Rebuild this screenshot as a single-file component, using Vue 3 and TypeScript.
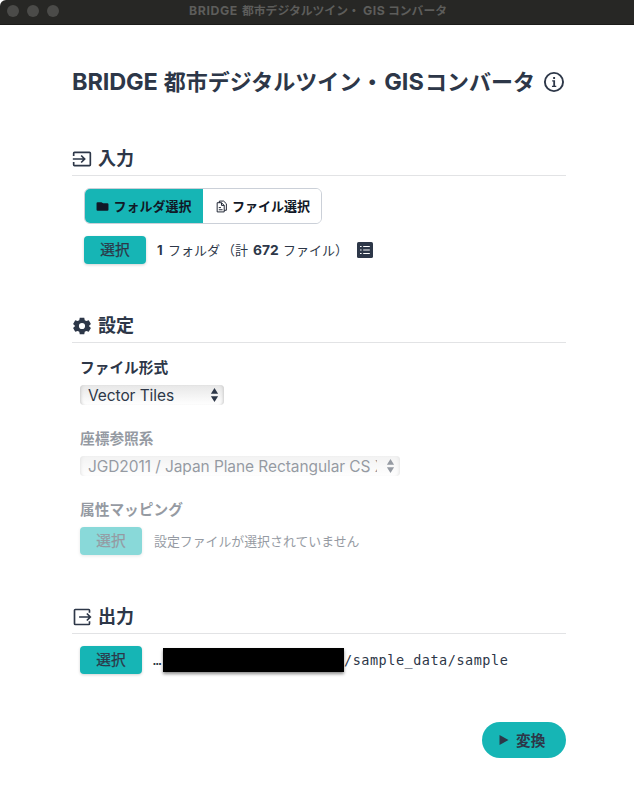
<script setup lang="ts">
import { ref } from 'vue'

type Mode = 'folder' | 'file'
const mode = ref<Mode>('folder')
const fileCount = 672
const outputTail = '/sample_data/sample'
</script>

<template>
  <div class="window">
    <header class="titlebar">
      <div class="lights"><i></i><i></i><i></i></div>
      <div class="wintitle"><span class="w1">BRIDGE</span><span class="w2">都市デジタルツイン・</span><span class="w3">GIS</span><span class="w4">コンバータ</span></div>
    </header>
    <main>
      <h1>
        <span class="t1">BRIDGE</span><span class="t2">都市デジタルツイン・</span><span class="t3">GIS</span><span class="t4">コンバータ</span>
        <svg class="info" viewBox="0 0 24 24"><circle cx="12" cy="12" r="9.100" fill="none" stroke="currentColor" stroke-width="1.900" /><path fill="currentColor" d="M11.200 7h1.900v2h-1.900zM10.200 10.300h2.900v5.500h1.200V17H10v-1.200h1.300v-4.300h-1.100z" /></svg>
      </h1>

      <section class="input">
        <h2>
          <svg viewBox="0 0 24 24"><path fill="none" stroke="currentColor" stroke-width="2" d="M2 8.500V5q0-1 1-1h18q1 0 1 1v14q0 1-1 1H3q-1 0-1-1v-3.500M1 12h13.500M11 7.800l4.200 4.200-4.200 4.200" /></svg>
          <span>入力</span>
        </h2>
        <div class="tabs">
          <button class="tab" :class="{ active: mode === 'folder' }" @click="mode = 'folder'">
            <svg viewBox="0 0 24 24"><path fill="currentColor" d="M10 4H3a2 2 0 0 0-2 2v12a2 2 0 0 0 2 2h18a2 2 0 0 0 2-2V8a2 2 0 0 0-2-2h-8z" /></svg>
            <span>フォルダ選択</span>
          </button>
          <button class="tab file" :class="{ active: mode === 'file' }" @click="mode = 'file'">
            <svg viewBox="0 0 24 24"><path fill="none" stroke="currentColor" stroke-width="1.700" stroke-linejoin="round" d="M8 5V2h8l5 5v12h-4M4 5h8l5 5v12H4zM12 5v5h5M7 14h4M7 18h7" /></svg>
            <span>ファイル選択</span>
          </button>
        </div>
        <div class="row picked">
          <button class="btn">選択</button>
          <span class="count"><b class="one">1</b><span class="c1">フォルダ</span><span class="c2">（計</span><b class="num">{{ fileCount }}</b><span class="c3">ファイル）</span></span>
          <svg class="list" viewBox="0 0 16 16"><rect width="16" height="16" rx="1.600" fill="currentColor" /><path stroke="#fff" stroke-width="1.200" d="M3 4.500h1.600M6.200 4.500h6.600M3 8h1.600M6.200 8h6.600M3 11.500h1.600M6.200 11.500h6.600" /></svg>
        </div>
      </section>

      <section class="settings">
        <h2>
          <svg viewBox="0 0 24 24"><path fill="currentColor" fill-rule="evenodd" d="M9.300 2h5.400l.6 3 1.900 1.100 2.900-1 2.600 4.500L20.500 11.600v.8l2.200 2-2.600 4.500-2.900-1-1.900 1.100-.6 3H9.300l-.6-3-1.900-1.100-2.900 1-2.600-4.500 2.200-2v-.8L1.300 9.600l2.600-4.500 2.900 1L8.700 5zM12 8.300a3.700 3.700 0 1 0 0 7.400 3.700 3.700 0 0 0 0-7.400" /></svg>
          <span>設定</span>
        </h2>
        <div class="field">
          <label>ファイル形式</label>
          <div class="select short"><span>Vector Tiles</span><svg viewBox="0 0 8 16"><path fill="currentColor" d="M4 1l3.600 5.700H.4zM4 15L.4 9.300h7.200z" /></svg></div>
        </div>
        <div class="field disabled">
          <label>座標参照系</label>
          <div class="select long"><span>JGD2011 / Japan Plane Rectangular CS X</span><svg viewBox="0 0 8 16"><path fill="currentColor" d="M4 1l3.600 5.700H.4zM4 15L.4 9.300h7.200z" /></svg></div>
        </div>
        <div class="field disabled">
          <label>属性マッピング</label>
          <div class="row mapping"><button class="btn" disabled>選択</button><span class="note">設定ファイルが選択されていません</span></div>
        </div>
      </section>

      <section class="output">
        <h2>
          <svg viewBox="0 0 24 24"><path fill="none" stroke="currentColor" stroke-width="2" d="M21 7V4q0-1-1-1H4Q3 3 3 4v16q0 1 1 1h16q1 0 1-1v-3M8.500 12h13M17.800 7.800L22 12l-4.200 4.200" /></svg>
          <span>出力</span>
        </h2>
        <div class="row out"><button class="btn">選択</button><span class="dots">…</span><span class="redacted"></span><span class="path">{{ outputTail }}</span></div>
      </section>

      <button class="convert">
        <svg viewBox="0 0 10 10"><path fill="currentColor" d="M.5 0L9.500 5 .5 10z" /></svg>
        <span>変換</span>
      </button>
    </main>
  </div>
</template>

<style>
body {
  margin: 0;
  background: #fff;
}
</style>

<style scoped>
* {
  box-sizing: border-box;
}
.window {
  height: 793px;
  overflow: hidden;
  background: #fff;
  color: #2d3748;
  font-family: Inter, "Noto Sans CJK JP", sans-serif;
  white-space: nowrap;
}
button {
  font-family: inherit;
  color: inherit;
  border: 0;
  padding: 0;
  margin: 0;
}
.titlebar {
  height: 25px;
  display: flex;
  align-items: center;
  padding: 0 0 3px 7px;
  background: #272725;
  border-radius: 6px 0 0 0;
  border-bottom: 1px solid #1c1c1a;
  color: #5d5d5b;
}
.lights {
  display: flex;
  gap: 8px;
  width: 182px;
}
.lights i {
  width: 12px;
  height: 12px;
  border-radius: 50%;
  background: #4b4b49;
}
.wintitle {
  display: flex;
  font-size: 11.800px;
  line-height: 18px;
  font-weight: 700;
}
.w1 { width: 53px; font-size: 12.300px; letter-spacing: 0.6px; }
.w2 { width: 121px; }
.w3 { width: 25px; font-size: 12.300px; letter-spacing: 0.5px; }
main {
  display: flex;
  flex-direction: column;
  padding: 38px 68px 0 72px;
}
h1 {
  display: flex;
  align-items: center;
  margin: 0;
  height: 38px;
  font-size: 22px;
  line-height: 36px;
  font-weight: 700;
}
.t1 { width: 92px; font-size: 23.500px; letter-spacing: -0.150px; }
.t2 { width: 221px; }
.t3 { width: 41px; font-size: 23.500px; letter-spacing: 0; }
.info {
  width: 24px;
  height: 24px;
  margin-left: 7px;
}
section {
  width: 494px;
}
.input { margin-top: 42px; height: 167px; }
.settings { height: 291px; }
h2 {
  display: flex;
  align-items: center;
  gap: 6px;
  height: 33px;
  margin: 0;
  border-bottom: 1px solid #e2e3e5;
  font-size: 18px;
  line-height: 28px;
  font-weight: 700;
}
h2 svg {
  width: 20px;
  height: 20px;
}
.tabs {
  display: flex;
  width: 238px;
  height: 36px;
  margin: 12px 0 0 12px;
  border: 1px solid #cbd0d8;
  border-radius: 6px;
  overflow: hidden;
}
.tab {
  width: 118px;
  display: flex;
  align-items: center;
  justify-content: center;
  gap: 4px;
  background: #fff;
  color: #111827;
  font-size: 13px;
  font-weight: 700;
  line-height: 20px;
}
.tab.file { padding-left: 1px; }
.tab.active { background: #16b5b5; }
.tab svg {
  width: 13px;
  height: 13px;
}
.row {
  display: flex;
  align-items: center;
  height: 28px;
}
.btn {
  width: 62px;
  height: 28px;
  border-radius: 4px;
  background: #16b5b5;
  font-size: 14.700px;
  line-height: 28px;
  font-weight: 400;
  -webkit-text-stroke: 0.250px currentColor;
  box-shadow: 0 1px 3px rgba(0, 0, 0, 0.18);
}
.picked { margin: 12px 0 0 12px; }
.count {
  display: flex;
  margin-left: 11px;
  font-size: 13px;
  line-height: 20px;
}
.one { width: 11px; }
.c1 { width: 54px; }
.c2 { width: 31px; }
.num { width: 30px; font-size: 13.800px; }
.c3 { width: 74px; }
.list {
  width: 16px;
  height: 16px;
}
.field {
  display: flex;
  flex-direction: column;
  height: 71px;
  padding: 14px 0 0 8px;
}
label {
  height: 28px;
  font-size: 14.700px;
  line-height: 22px;
  font-weight: 700;
}
.select {
  display: flex;
  align-items: center;
  justify-content: space-between;
  height: 20px;
  padding: 0 5px 0 8px;
  border-radius: 4px;
  font-size: 15.500px;
  letter-spacing: -0.080px;
  background: linear-gradient(#e7e7e7, #fff);
  box-shadow: inset 3px 0 3px -2px #ccc, inset -3px 0 3px -2px #ccc;
}
.select span {
  overflow: hidden;
  height: 20px;
  line-height: 22px;
}
.select svg {
  width: 9px;
  height: 16px;
}
.short { width: 144px; }
.long { width: 320px; }
.long span { width: 289px; }
.disabled label,
.disabled .select,
.disabled .row { opacity: 0.5; }
.note {
  margin-left: 12px;
  padding-bottom: 2px;
  font-size: 12.900px;
}
.out { margin: 12px 0 0 8px; }
.dots {
  width: 21px;
  padding-left: 11px;
  font-size: 14px;
  font-family: "DejaVu Sans Mono", monospace;
}
.redacted {
  width: 181px;
  height: 24px;
  margin-bottom: 1px;
  background: #000;
  box-shadow: 0 2px 3px rgba(0, 0, 0, 0.45);
}
.path {
  font-family: "DejaVu Sans Mono", monospace;
  font-size: 13.500px;
  letter-spacing: 0.520px;
}
.convert {
  display: flex;
  align-items: center;
  align-self: flex-end;
  gap: 7px;
  width: 84px;
  height: 36px;
  margin-top: 121px;
  padding: 0 0 1px 17px;
  border-radius: 18px;
  background: #16b5b5;
  font-size: 14.700px;
  font-weight: 700;
}
.output { height: 0; }
.convert svg {
  width: 10px;
  height: 10px;
}
</style>
